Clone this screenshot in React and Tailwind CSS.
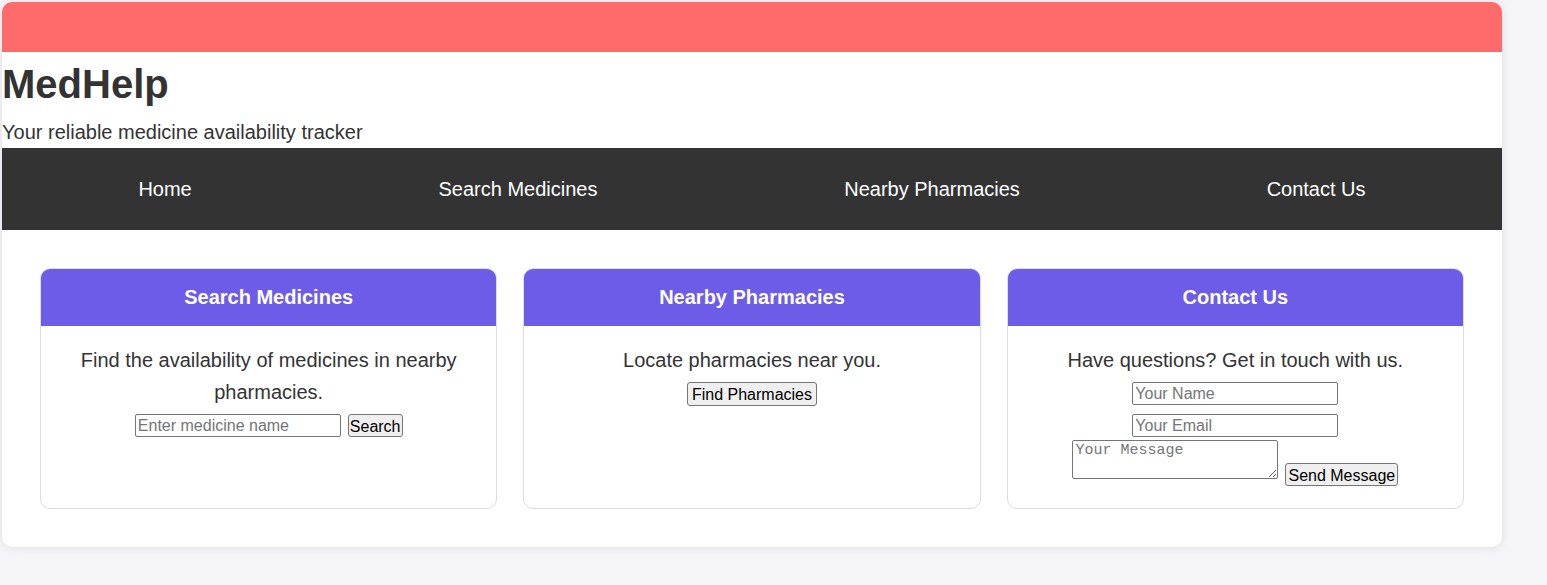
import React from "react";

const inputCls =
  "h-[23px] w-[206px] rounded-[2px] border border-[#767676] bg-white px-[2px] text-[16px] leading-normal text-black placeholder:text-[#757575] outline-none";
const buttonCls =
  "h-[23px] rounded-[3px] border border-[#767676] bg-[#efefef] text-[16px] leading-normal text-black";

function Card({ title, children }) {
  return (
    <div className="flex flex-1 flex-col overflow-hidden rounded-[10px] border border-[#dddddd] bg-white">
      <div className="flex h-[57px] items-center justify-center pb-[1px] bg-[#6c5ce7] text-[20px] font-bold text-white">
        {title}
      </div>
      <div className="flex flex-col items-center px-[20px] pt-[18px] pb-[22px] text-center">
        {children}
      </div>
    </div>
  );
}

export default function App() {
  return (
    <div className="min-h-[585px] bg-[#f4f4f9] pt-[2px] pl-[2px] font-['Liberation_Sans',Arial,sans-serif] text-[#333333]">
      <div className="w-[1500px] overflow-hidden rounded-[10px] bg-white shadow-[0_0_10px_rgba(0,0,0,0.1)]">
        <div className="h-[50px] bg-[#ff6b6b]" />
        <header>
          <h1 className="text-[40px] font-bold leading-[64px]">MedHelp</h1>
          <p className="text-[20px] leading-[32px]">Your reliable medicine availability tracker</p>
        </header>
        <nav className="flex h-[82px] items-center justify-around bg-[#333333] px-[13px] text-[20px] text-white">
          <a href="#">Home</a>
          <a href="#">Search Medicines</a>
          <a href="#">Nearby Pharmacies</a>
          <a href="#">Contact Us</a>
        </nav>
        <main className="flex gap-[26px] px-[38px] pt-[38px] pb-[38px] text-[20px] leading-[32px]">
          <Card title="Search Medicines">
            <p>Find the availability of medicines in nearby pharmacies.</p>
            <div className="mt-[6px] flex gap-[7px]">
              <input className={inputCls} placeholder="Enter medicine name" />
              <button className={`${buttonCls} px-[1px]`}>Search</button>
            </div>
          </Card>
          <Card title="Nearby Pharmacies">
            <p>Locate pharmacies near you.</p>
            <button className={`${buttonCls} mt-[6px] h-[24px] px-[4px]`}>Find Pharmacies</button>
          </Card>
          <Card title="Contact Us">
            <p>Have questions? Get in touch with us.</p>
            <input className={`${inputCls} mt-[6px]`} placeholder="Your Name" />
            <input className={`${inputCls} mt-[9px]`} placeholder="Your Email" />
            <div className="mt-[3px] flex items-start gap-[7px]">
              <textarea
                className="h-[39px] w-[206px] rounded-[2px] border border-[#767676] px-[2px] py-[1px] font-['Liberation_Mono',monospace] text-[15px] leading-[17px] text-black placeholder:text-[#757575] outline-none"
                placeholder="Your Message"
              />
              <button className={`${buttonCls} mt-[23px] px-[2px]`}>Send Message</button>
            </div>
          </Card>
        </main>
      </div>
    </div>
  );
}
